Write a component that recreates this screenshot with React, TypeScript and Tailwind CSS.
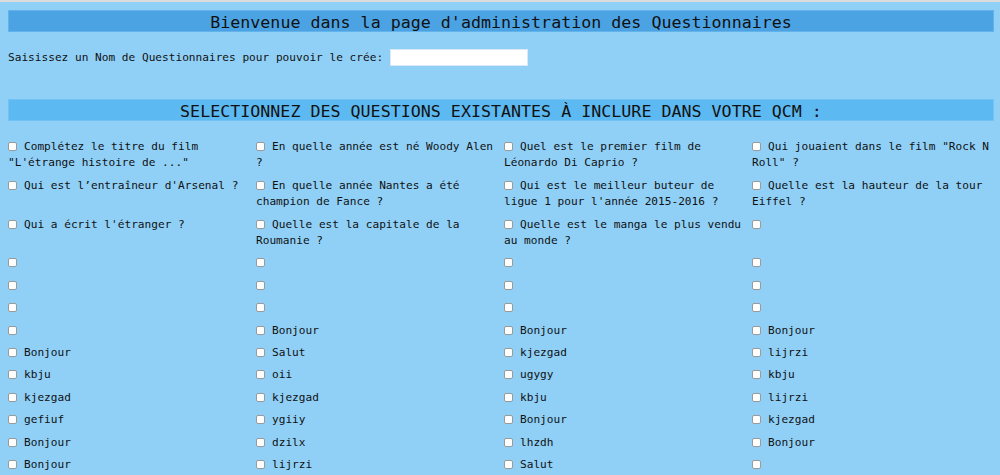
import React from "react";

const rows: string[][] = [
  [
    "Complétez le titre du film \"L'étrange histoire de ...\"",
    "En quelle année est né Woody Alen ?",
    "Quel est le premier film de Léonardo Di Caprio ?",
    "Qui jouaient dans le film \"Rock N Roll\" ?",
  ],
  [
    "Qui est l’entraîneur d'Arsenal ?",
    "En quelle année Nantes a été champion de Fance ?",
    "Qui est le meilleur buteur de ligue 1 pour l'année 2015-2016 ?",
    "Quelle est la hauteur de la tour Eiffel ?",
  ],
  [
    "Qui a écrit l'étranger ?",
    "Quelle est la capitale de la Roumanie ?",
    "Quelle est le manga le plus vendu au monde ?",
    "",
  ],
  ["", "", "", ""],
  ["", "", "", ""],
  ["", "", "", ""],
  ["", "Bonjour", "Bonjour", "Bonjour"],
  ["Bonjour", "Salut", "kjezgad", "lijrzi"],
  ["kbju", "oii", "ugygy", "kbju"],
  ["kjezgad", "kjezgad", "kbju", "lijrzi"],
  ["gefiuf", "ygiiy", "Bonjour", "kjezgad"],
  ["Bonjour", "dzilx", "lhzdh", "Bonjour"],
  ["Bonjour", "lijrzi", "Salut", ""],
];

export default function App() {
  return (
    <div
      className="w-[1000px] h-[475px] overflow-hidden bg-[#90d0f7] text-[#111]"
      style={{ fontFamily: '"DejaVu Sans Mono", "Liberation Mono", monospace' }}
    >
      <div className="h-[2px] bg-[#dcdcdc]" />
      <div className="mt-[8px] ml-[8px] w-[986px] h-[22px] bg-[#4ca3e3] border border-[#62b2ec] flex items-center justify-center pt-[3px] text-[16.66px] leading-[20px]">
        Bienvenue dans la page d'administration des Questionnaires
      </div>
      <div className="mt-[17px] ml-[8px] h-[17px] flex items-center text-[11.13px]">
        <span className="pt-[2px]">Saisissez un Nom de Questionnaires pour pouvoir le crée:</span>
        <input
          type="text"
          className="ml-[7px] w-[138px] h-[17px] bg-white border border-[#dbe9f5] outline-none"
        />
      </div>
      <div className="mt-[33px] ml-[8px] w-[986px] h-[22px] bg-[#5db9f2] border border-[#72c3f4] flex items-center justify-center pt-[3px] text-[16.66px] leading-[20px]">
        SELECTIONNEZ DES QUESTIONS EXISTANTES À INCLURE DANS VOTRE QCM :
      </div>
      <div className="mt-[18px] ml-[8px] grid grid-cols-[repeat(4,248px)] gap-y-[6px] text-[11.13px] leading-[16.4px]">
        {rows.map((r, i) =>
          r.map((t, j) => (
            <div key={`${i}-${j}`} className="pr-[2px]">
              <span className="inline-block w-[9px] h-[9px] bg-white border border-[#9a9a9a] rounded-[2px] mr-[7px] align-[-1px]" />
              {t}
            </div>
          ))
        )}
      </div>
    </div>
  );
}
